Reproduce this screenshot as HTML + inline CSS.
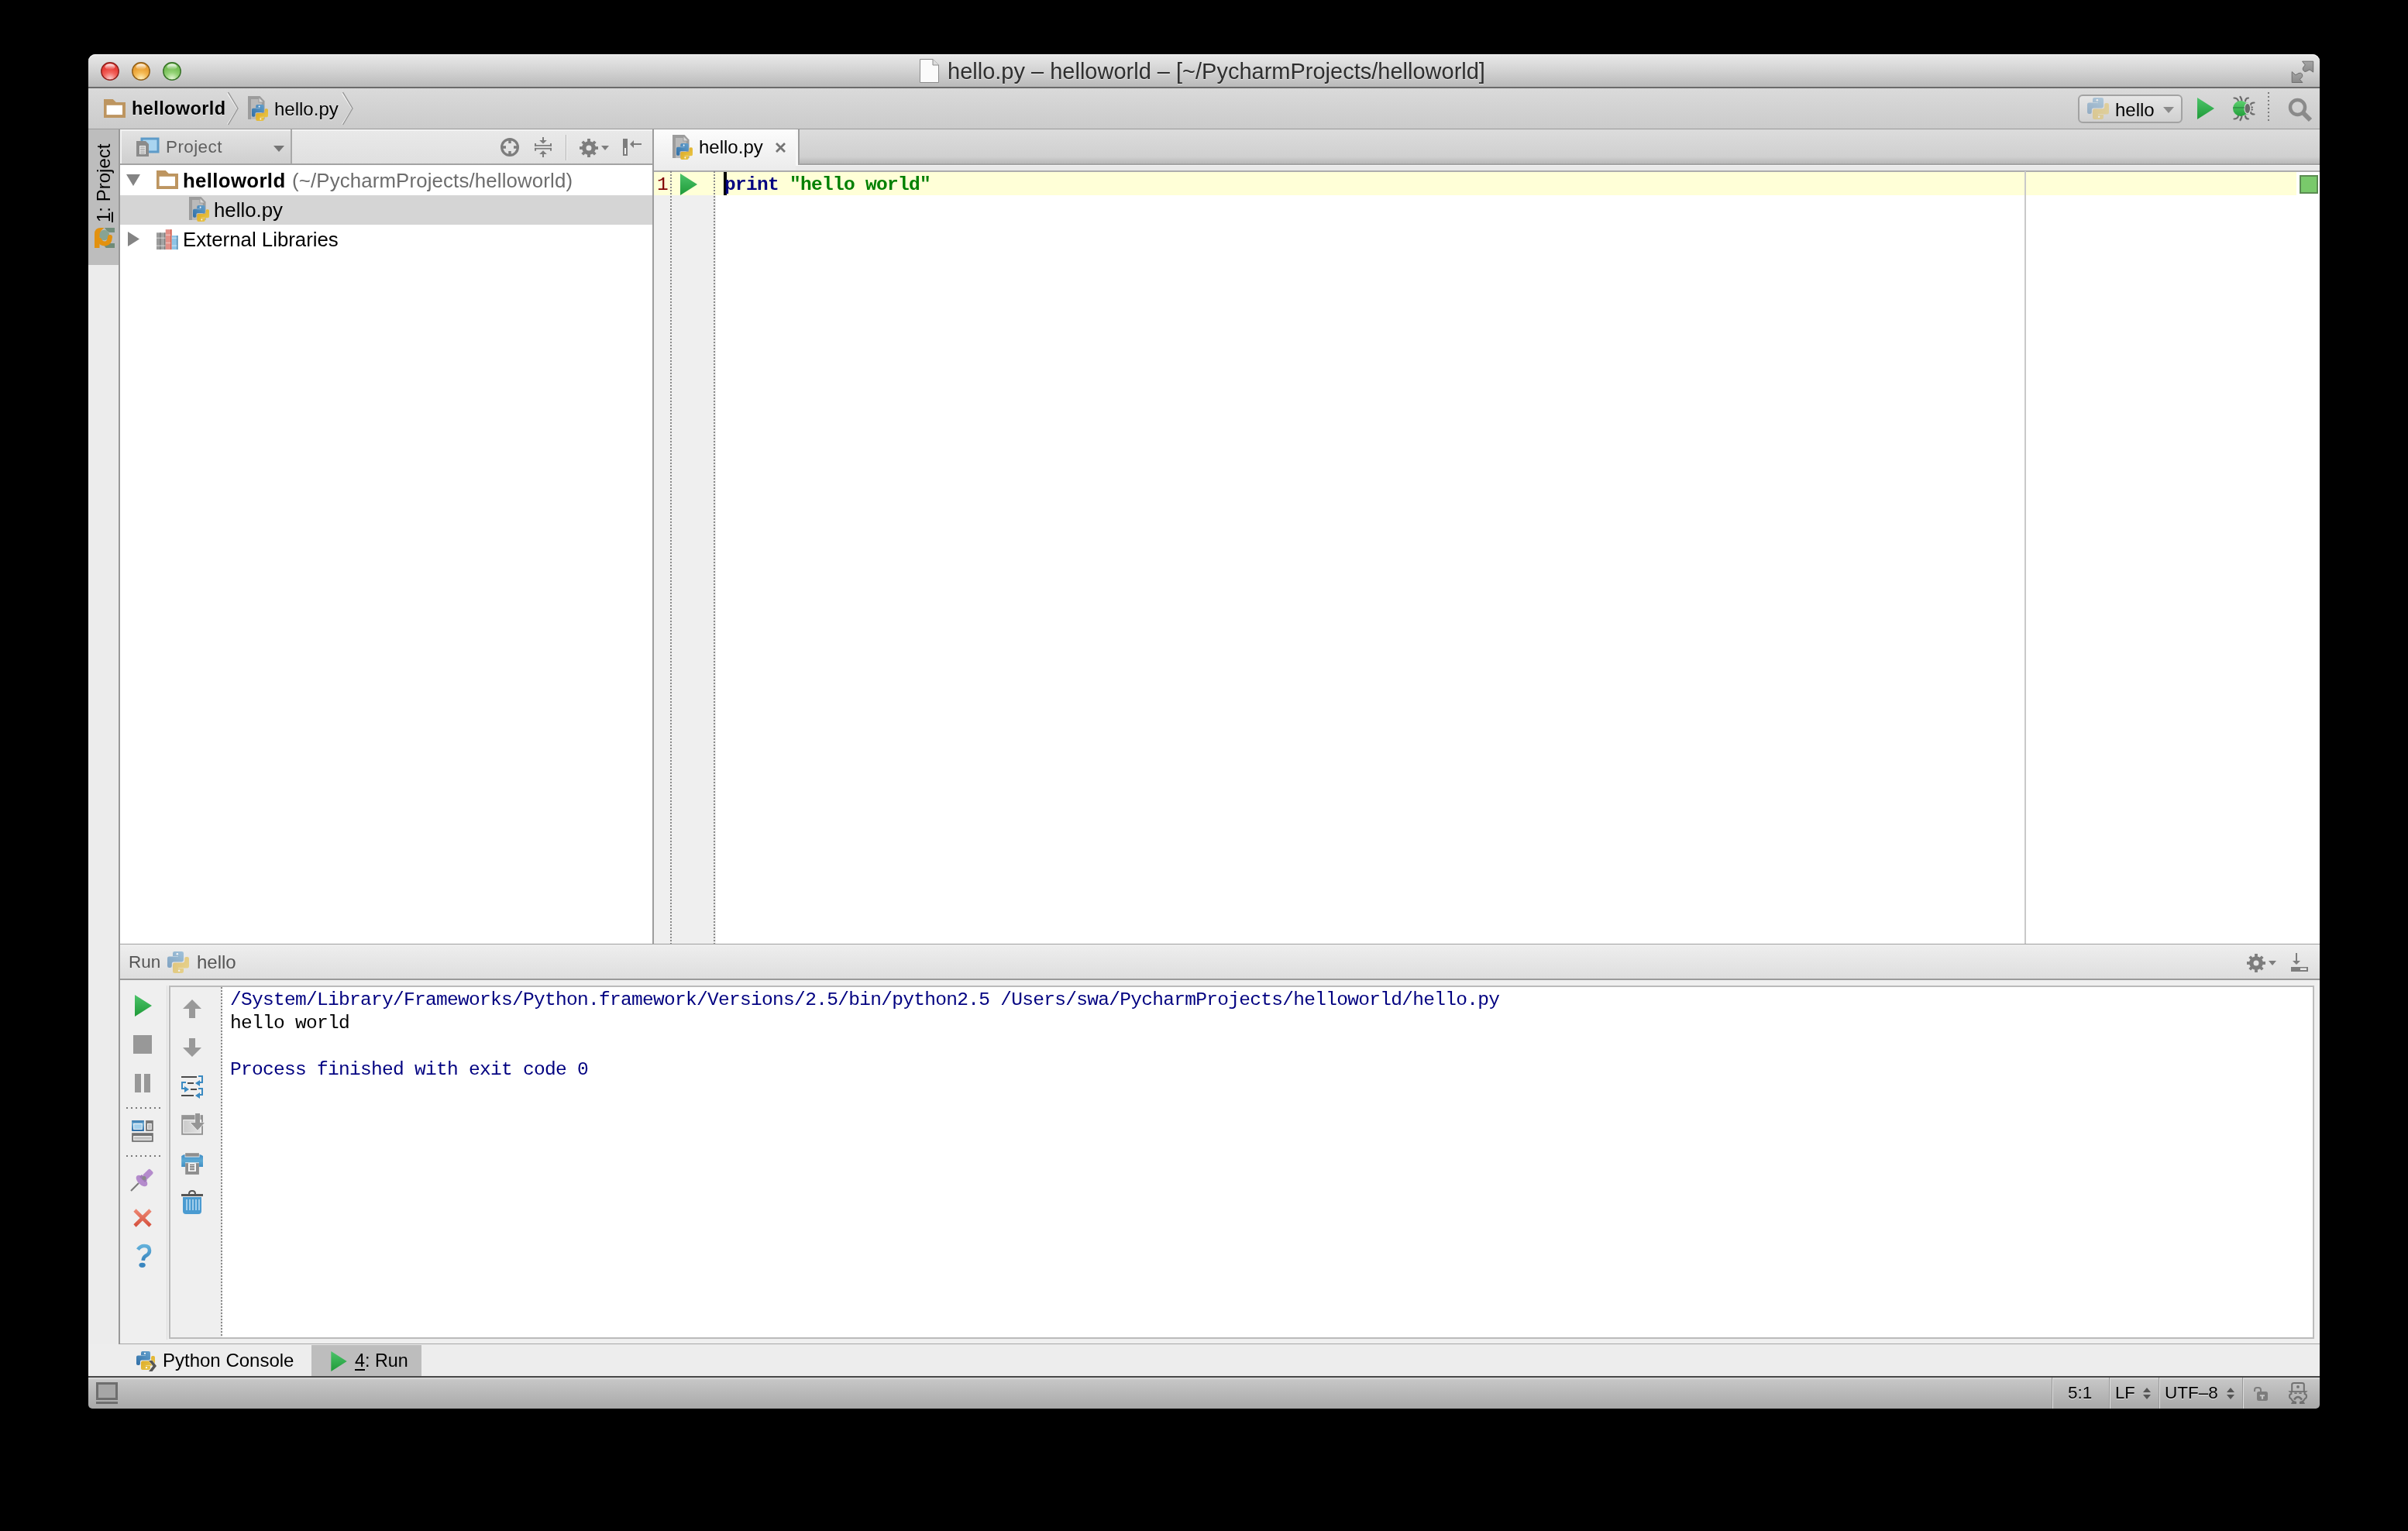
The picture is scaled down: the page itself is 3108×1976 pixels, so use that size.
<!DOCTYPE html>
<html><head><meta charset="utf-8"><title>PyCharm</title>
<style>
*{margin:0;padding:0;box-sizing:border-box}
html,body{width:3108px;height:1976px;background:#000;overflow:hidden;font-family:"Liberation Sans",sans-serif}
.a{position:absolute}
.t{position:absolute;white-space:pre;line-height:1;font-family:"Liberation Sans",sans-serif;will-change:transform}
.mono{font-family:"Liberation Mono",monospace;letter-spacing:-0.7px}
svg.a{overflow:visible}
</style></head>
<body>

<svg width="0" height="0" style="position:absolute">
<defs>
<linearGradient id="gRun" x1="0" y1="0" x2="0" y2="1"><stop offset="0" stop-color="#4cc46a"/><stop offset="1" stop-color="#1f9a38"/></linearGradient>
<linearGradient id="gBug" x1="0" y1="0" x2="0" y2="1"><stop offset="0" stop-color="#5ccf6e"/><stop offset="1" stop-color="#23a03c"/></linearGradient>
<radialGradient id="gRed" cx="0.5" cy="0.95" r="0.65"><stop offset="0" stop-color="#fbd0d0"/><stop offset="0.6" stop-color="#f2635c"/><stop offset="1" stop-color="#e8403a"/></radialGradient>
<radialGradient id="gYel" cx="0.5" cy="0.95" r="0.65"><stop offset="0" stop-color="#fff2c0"/><stop offset="0.6" stop-color="#f4b851"/><stop offset="1" stop-color="#e9a035"/></radialGradient>
<radialGradient id="gGrn" cx="0.5" cy="0.95" r="0.65"><stop offset="0" stop-color="#e6f7d6"/><stop offset="0.6" stop-color="#92d274"/><stop offset="1" stop-color="#78bf58"/></radialGradient>
<linearGradient id="gHi" x1="0" y1="0" x2="0" y2="1"><stop offset="0" stop-color="#fff" stop-opacity=".95"/><stop offset="1" stop-color="#fff" stop-opacity="0"/></linearGradient>
<linearGradient id="gPyB" x1="1" y1="0" x2="0" y2="1"><stop offset="0" stop-color="#64a0cc"/><stop offset="1" stop-color="#2f6ea6"/></linearGradient>
<linearGradient id="gPyY" x1="0" y1="0" x2="1" y2="1"><stop offset="0" stop-color="#ecca4c"/><stop offset="1" stop-color="#d9a521"/></linearGradient>
<symbol id="py" viewBox="0 0 24 24">
 <path fill="url(#gPyB)" d="M6 2Q6 0 8 0H16Q18 0 18 2V9.5Q18 11.5 16 11.5H7Q5 11.5 5 13.5V16Q5 18 3 18H2Q0 18 0 16V7.5Q0 5.5 2 5.5H6Z"/>
 <rect x="6" y="5.1" width="6" height="0.8" fill="#fff" opacity=".45"/>
 <circle cx="11" cy="2.8" r="1.1" fill="#fff"/>
 <path fill="url(#gPyY)" transform="rotate(180 12 12)" d="M6 2Q6 0 8 0H16Q18 0 18 2V9.5Q18 11.5 16 11.5H7Q5 11.5 5 13.5V16Q5 18 3 18H2Q0 18 0 16V7.5Q0 5.5 2 5.5H6Z"/>
 <rect x="12" y="18.1" width="6" height="0.8" fill="#fff" opacity=".45"/>
 <circle cx="13" cy="21.2" r="1.1" fill="#fff"/>
</symbol>
<symbol id="pyfile" viewBox="0 0 27 32">
 <path d="M1 0H16.5L22.5 6.5V30H1Z" fill="#9c9c9c"/>
 <path d="M5 4H14.5V8.5H18.8V30H5Z" fill="#fff" opacity=".3"/>
 <path d="M15.5 2.5L20.5 7.5H15.5Z" fill="#f2f2f2" opacity=".7"/>
 <use href="#py" x="6" y="11" width="21" height="21"/>
</symbol>
<symbol id="folder" viewBox="0 0 28 24">
 <path fill="#bd9560" d="M0 0H11.7L15.8 4H28V24H0Z"/>
 <rect x="3.6" y="7.8" width="20.4" height="12.3" fill="#fff"/>
</symbol>
<symbol id="runtri" viewBox="0 0 22 28">
 <path d="M0 0L22 14L0 28Z" fill="url(#gRun)"/>
</symbol>
</defs></svg>
<div class="a" style="left:114px;top:70px;width:2880px;height:42px;background:linear-gradient(#e9e9e9,#d3d3d3 50%,#bababa);border-radius:9px 9px 0 0;box-shadow:inset 0 1px 0 #f8f8f8"></div>
<div class="a" style="left:114px;top:112px;width:2880px;height:2px;background:#6b6b6b"></div>
<div class="a" style="left:114px;top:114px;width:2880px;height:52px;background:linear-gradient(#dadada,#cbcbcb)"></div>
<div class="a" style="left:114px;top:166px;width:2880px;height:1px;background:#9a9a9a"></div>
<div class="a" style="left:114px;top:167px;width:39px;height:1609px;background:#ececec"></div>
<div class="a" style="left:114px;top:167px;width:39px;height:175px;background:#bdbdbd"></div>
<div class="a" style="left:153px;top:167px;width:2px;height:1568px;background:#999"></div>
<div class="a" style="left:155px;top:167px;width:687px;height:44px;background:linear-gradient(#e9e9e9,#e0e0e0);box-shadow:inset 0 2px 0 #f3f3f3"></div>
<div class="a" style="left:155px;top:167px;width:220px;height:44px;background:linear-gradient(#e3e3e3,#cfcfcf);box-shadow:inset 2px 2px 0 #f2f2f2"></div>
<div class="a" style="left:375px;top:167px;width:2px;height:44px;background:#a9a9a9"></div>
<div class="a" style="left:155px;top:211px;width:687px;height:2px;background:#a3a3a3"></div>
<div class="a" style="left:155px;top:213px;width:687px;height:1005px;background:#fff"></div>
<div class="a" style="left:155px;top:252px;width:687px;height:38px;background:#d5d5d5"></div>
<div class="a" style="left:842px;top:167px;width:2px;height:1051px;background:#9d9d9d"></div>
<div class="a" style="left:844px;top:167px;width:2150px;height:53px;background:#e9e9e9"></div>
<div class="a" style="left:1030px;top:167px;width:1964px;height:46px;background:linear-gradient(#dcdcdc,#d0d0d0 80%,#b9b9b9);border-left:2px solid #9d9d9d;border-bottom:2px solid #a4a4a4"></div>
<div class="a" style="left:1030px;top:213px;width:1964px;height:1px;background:#f6f6f6"></div>
<div class="a" style="left:844px;top:167px;width:183px;height:53px;background:linear-gradient(#fcfcfc,#ebebeb)"></div>
<div class="a" style="left:1027px;top:167px;width:3px;height:47px;background:#f8f8f8"></div>
<div class="a" style="left:844px;top:220px;width:2150px;height:2px;background:#adadad"></div>
<div class="a" style="left:844px;top:222px;width:2150px;height:996px;background:#fff"></div>
<div class="a" style="left:844px;top:222px;width:80px;height:996px;background:#efefef"></div>
<div class="a" style="left:844px;top:222px;width:2120px;height:30px;background:#ffffd7"></div>
<div class="a" style="left:865px;top:221px;width:2px;height:997px;background:repeating-linear-gradient(#8a8a8a 0 2px,transparent 2px 4px)"></div>
<div class="a" style="left:921px;top:221px;width:2px;height:997px;background:repeating-linear-gradient(#8a8a8a 0 2px,transparent 2px 4px)"></div>
<div class="a" style="left:2613px;top:221px;width:2px;height:997px;background:#c9c9c9"></div>
<div class="a" style="left:155px;top:1218px;width:2839px;height:1px;background:#a0a0a0"></div>
<div class="a" style="left:155px;top:1219px;width:2839px;height:44px;background:linear-gradient(#eeeeee,#dedede)"></div>
<div class="a" style="left:155px;top:1263px;width:2839px;height:2px;background:#999"></div>
<div class="a" style="left:155px;top:1265px;width:2839px;height:469px;background:#efefef"></div>
<div class="a" style="left:215px;top:1272px;width:1px;height:457px;background:#dcdcdc"></div>
<div class="a" style="left:218px;top:1272px;width:2769px;height:456px;border:2px solid #bbbbbb;background:#efefef"></div>
<div class="a" style="left:285px;top:1274px;width:2px;height:452px;background:repeating-linear-gradient(#8a8a8a 0 2px,transparent 2px 4px)"></div>
<div class="a" style="left:287px;top:1274px;width:2698px;height:452px;background:#fff"></div>
<div class="a" style="left:155px;top:1734px;width:2839px;height:1px;background:#a8a8a8"></div>
<div class="a" style="left:114px;top:1735px;width:2880px;height:41px;background:#ededed"></div>
<div class="a" style="left:402px;top:1736px;width:142px;height:40px;background:#bdbdbd"></div>
<div class="a" style="left:114px;top:1776px;width:2880px;height:2px;background:#474747"></div>
<div class="a" style="left:114px;top:1778px;width:2880px;height:40px;background:linear-gradient(#e2e2e2,#c6c6c6 7%,#a9a9a9);border-radius:0 0 5px 5px"></div>
<svg class="a" style="left:130px;top:80px;" width="24" height="24" viewBox="0 0 24 24"><circle cx="12" cy="12" r="11.2" fill="url(#gRed)" stroke="#8e1f1b" stroke-width="1.4"/><ellipse cx="12" cy="6.2" rx="6.5" ry="3.8" fill="url(#gHi)"/></svg>
<svg class="a" style="left:170px;top:80px;" width="24" height="24" viewBox="0 0 24 24"><circle cx="12" cy="12" r="11.2" fill="url(#gYel)" stroke="#8d5c17" stroke-width="1.4"/><ellipse cx="12" cy="6.2" rx="6.5" ry="3.8" fill="url(#gHi)"/></svg>
<svg class="a" style="left:210px;top:80px;" width="24" height="24" viewBox="0 0 24 24"><circle cx="12" cy="12" r="11.2" fill="url(#gGrn)" stroke="#346f25" stroke-width="1.4"/><ellipse cx="12" cy="6.2" rx="6.5" ry="3.8" fill="url(#gHi)"/></svg>
<svg class="a" style="left:1187px;top:76px;" width="25" height="31" viewBox="0 0 25 31"><path d="M0.5 0.5H17L24.5 8V30.5H0.5Z" fill="#fbfbfb" stroke="#8c8c8c"/><path d="M17 0.5V8H24.5" fill="#ddd" stroke="#8c8c8c"/></svg>
<div class="t" style="left:1223px;top:78px;font-size:29px;color:#2e2e2e;text-shadow:0 1px 0 rgba(255,255,255,.5)">hello.py – helloworld – [~/PycharmProjects/helloworld]</div>
<svg class="a" style="left:2952px;top:74px;" width="40" height="38" viewBox="0 0 40 38"><defs><linearGradient id="gEx" x1="0" y1="0" x2="0" y2="1"><stop offset="0" stop-color="#a6a6a6"/><stop offset="1" stop-color="#8a8a8a"/></linearGradient></defs><g fill="url(#gEx)" stroke="#6e6e6e" stroke-width="1"><path d="M19.6 5.2H33.7V19.1L29 15.9L25 18Q22 19.5 20.5 16.5Q19.5 14 21.5 12L23.3 9.9Z"/><path d="M6.2 32.5V18.6L10.9 22.8L15 20.5Q18 19 19.5 22Q20.5 24.5 18.5 26.5L16.1 28.3L19.9 32.5Z"/></g></svg>
<svg class="a" style="left:134px;top:128px;" width="28" height="24"><use href="#folder"/></svg>
<div class="t" style="left:170px;top:128.6px;font-size:23.5px;font-weight:bold;color:#000;letter-spacing:.4px;text-shadow:0 1px 0 rgba(255,255,255,.6)">helloworld</div>
<svg class="a" style="left:293px;top:119px;" width="15" height="42" viewBox="0 0 15 42"><path d="M0.5 1.5L13.5 21.5L0.5 41.5" fill="none" stroke="#f6f6f6" stroke-width="1.2"/><path d="M1.5 0L14 21L1.5 42" fill="none" stroke="#959595" stroke-width="1.4"/></svg>
<svg class="a" style="left:319px;top:124px;" width="27" height="32"><use href="#pyfile"/></svg>
<div class="t" style="left:354px;top:128.5px;font-size:24px;color:#000;text-shadow:0 1px 0 rgba(255,255,255,.6)">hello.py</div>
<svg class="a" style="left:441px;top:119px;" width="15" height="42" viewBox="0 0 15 42"><path d="M0.5 1.5L13.5 21.5L0.5 41.5" fill="none" stroke="#f6f6f6" stroke-width="1.2"/><path d="M1.5 0L14 21L1.5 42" fill="none" stroke="#959595" stroke-width="1.4"/></svg>
<div class="a" style="left:2682px;top:122px;width:135px;height:37px;border:2px solid #a2a2a2;border-radius:6px;background:linear-gradient(#e6e6e6,#d0d0d0)"></div>
<svg class="a" style="left:2694px;top:126px;opacity:.4" width="28" height="28"><use href="#py"/></svg>
<div class="t" style="left:2729.5px;top:130px;font-size:24px;color:#000">hello</div>
<svg class="a" style="left:2792px;top:138px;" width="14" height="8" viewBox="0 0 14 8"><path d="M0 0H14L7 8Z" fill="#8a8a8a"/></svg>
<svg class="a" style="left:2836px;top:126px;" width="22" height="28"><use href="#runtri"/></svg>
<svg class="a" style="left:2876px;top:120px;" width="40" height="40" viewBox="0 0 40 40"><g stroke="#6a6a6a" stroke-width="2.2" fill="none" stroke-linecap="round"><path d="M7.5 6.5Q12 6.5 13 10.5"/><path d="M15.5 5Q17 7 17.5 10"/><path d="M26 6.5Q22.5 6.5 22 10.5"/><path d="M7.5 33.5Q12 33.5 13 29.5"/><path d="M15.5 35Q17 33 17.5 30"/><path d="M26 33.5Q22.5 33.5 22 29.5"/><path d="M33.5 12.5Q29 12.5 28.5 16"/><path d="M33.5 27.5Q29 27.5 28.5 24"/><path d="M29 18.5H31M29 21.5H31"/></g><circle cx="16" cy="20" r="10" fill="url(#gBug)"/><path d="M22 12.5L26 12.5L26 27.5L22 27.5Z" fill="url(#gBug)"/><ellipse cx="25" cy="20" rx="4.6" ry="7.6" fill="#d5d5d5"/><ellipse cx="24.8" cy="20" rx="3.3" ry="6" fill="#6a6a6a"/><rect x="6.2" y="18.2" width="14.5" height="1.5" fill="#2f8f45"/></svg>
<div class="a" style="left:2927px;top:119px;width:2px;height:38px;background:repeating-linear-gradient(#7c7c7c 0 2px,transparent 2px 5px)"></div>
<svg class="a" style="left:2953px;top:126px;" width="32" height="31" viewBox="0 0 32 31"><circle cx="12.5" cy="12.5" r="9.5" fill="none" stroke="#8a8a8a" stroke-width="4.5"/><path d="M19 19L29 29" stroke="#8a8a8a" stroke-width="6" stroke-linecap="butt"/></svg>
<div class="t" style="left:122px;top:287px;font-size:24px;color:#000;transform-origin:0 0;transform:rotate(-90deg)"><u style="text-decoration-thickness:2px;text-underline-offset:2px">1</u>: Project</div>
<svg class="a" style="left:122px;top:294px;" width="26" height="26" viewBox="0 0 26 26"><path d="M13 0H26V6H19Q15 4 13 0Z" fill="#728f7c"/><circle cx="12.5" cy="9.5" r="6.8" fill="#87a392"/><path d="M13 20H26V26H15Q12 24 13 20Z" fill="#6f8b78"/><path d="M0 26V8Q0 0 8 0H12.5Q8 3 6.5 8V26Z" fill="#e2910f"/><path d="M6.5 16Q9 21 14 20.5Q19.5 19.5 20 12" fill="none" stroke="#e2910f" stroke-width="6" stroke-linecap="round"/></svg>
<svg class="a" style="left:176px;top:178px;" width="29" height="25" viewBox="0 0 29 25"><rect x="7" y="1" width="21" height="17" fill="#a9d4f0" stroke="#5e9bc8" stroke-width="3"/><path d="M0 4H12L16 8V24H0Z" fill="#8b8b8b"/><rect x="4" y="10" width="8" height="11" fill="#eee"/><path d="M5 12H11M5 14.5H11M5 17H11M5 19.5H11" stroke="#888" stroke-width="1"/></svg>
<div class="t" style="left:214px;top:178.6px;font-size:22.5px;color:#606060;letter-spacing:.4px">Project</div>
<svg class="a" style="left:353px;top:188px;" width="14" height="8" viewBox="0 0 14 8"><path d="M0 0H14L7 8Z" fill="#747474"/></svg>
<svg class="a" style="left:646px;top:178px;" width="24" height="24" viewBox="0 0 24 24"><circle cx="12" cy="12" r="10.4" fill="none" stroke="#7d7d7d" stroke-width="3.2"/><path d="M12 1V7M12 17V23M1 12H7M17 12H23" stroke="#7d7d7d" stroke-width="3.4"/></svg>
<svg class="a" style="left:689px;top:177px;" width="24" height="26" viewBox="0 0 24 26"><g fill="#7d7d7d"><rect x="1" y="10" width="22" height="1.7"/><rect x="1" y="13.9" width="22" height="1.7"/><rect x="1" y="8" width="2" height="3.7"/><rect x="21" y="8" width="2" height="3.7"/><rect x="1" y="13.9" width="2" height="3.8"/><rect x="21" y="13.9" width="2" height="3.8"/><rect x="11" y="0" width="2" height="4.5"/><path d="M7.2 4H16.8L12 8.6Z"/><rect x="11" y="21.5" width="2" height="4.5"/><path d="M7.2 22H16.8L12 17.2Z"/></g></svg>
<div class="a" style="left:730px;top:174px;width:1px;height:33px;background:#b5b5b5;box-shadow:1px 0 0 #f5f5f5"></div>
<svg class="a" style="left:747px;top:178px;" width="26" height="26" viewBox="0 0 26 26"><g fill="#7d7d7d"><circle cx="13" cy="13" r="8.8"/><rect x="11.1" y="1" width="3.8" height="24"/><rect x="1" y="11.1" width="24" height="3.8"/><rect x="11.1" y="1.3" width="3.8" height="23.4" transform="rotate(45 13 13)"/><rect x="11.1" y="1.3" width="3.8" height="23.4" transform="rotate(-45 13 13)"/></g><circle cx="13" cy="13" r="3.5" fill="#e4e4e4"/></svg>
<svg class="a" style="left:776px;top:188px;" width="10" height="6" viewBox="0 0 10 6"><path d="M0 0H10L5 6Z" fill="#7d7d7d"/></svg>
<svg class="a" style="left:804px;top:179px;" width="24" height="22" viewBox="0 0 24 22"><rect x="0" y="0" width="6" height="22" fill="#7d7d7d"/><rect x="2" y="12" width="2" height="8" fill="#f4f4f4"/><path d="M9 7L14 2V6H24V8H14V12Z" fill="#7d7d7d"/></svg>
<svg class="a" style="left:163px;top:225px;" width="18" height="15" viewBox="0 0 18 15"><path d="M0 0H18L9 15Z" fill="#848484"/></svg>
<svg class="a" style="left:202px;top:220px;" width="28" height="24"><use href="#folder"/></svg>
<div class="t" style="left:236px;top:221.2px;font-size:25.8px;font-weight:bold;color:#000;letter-spacing:.35px">helloworld</div>
<div class="t" style="left:376.5px;top:221.2px;font-size:25.8px;color:#6d6d6d;letter-spacing:.15px">(~/PycharmProjects/helloworld)</div>
<svg class="a" style="left:243px;top:254px;" width="27" height="32"><use href="#pyfile"/></svg>
<div class="t" style="left:276px;top:259.2px;font-size:25.8px;color:#000">hello.py</div>
<svg class="a" style="left:165px;top:299px;" width="15" height="19" viewBox="0 0 15 19"><path d="M0 0V19L15 9.5Z" fill="#848484"/></svg>
<svg class="a" style="left:202px;top:296px;" width="28" height="26.2" viewBox="0 0 27 25"><rect x="0" y="4" width="5.5" height="21" fill="#9b9b9b"/><rect x="4.3" y="4" width="1.2" height="21" fill="#6e6e6e"/><rect x="5.6" y="4" width="5.5" height="21" fill="#a3a3a3"/><rect x="9.9" y="4" width="1.2" height="21" fill="#707070"/><rect x="11.3" y="0" width="7.5" height="25" fill="#e38f87"/><rect x="17.6" y="0" width="1.2" height="25" fill="#d0533f"/><rect x="19" y="7.6" width="7.5" height="17.4" fill="#8ec4e6"/><rect x="25.3" y="7.6" width="1.2" height="17.4" fill="#4a82a8"/><g fill="#fff" opacity=".4"><rect x="0" y="10" width="11" height="1.5"/><rect x="0" y="19.6" width="11" height="1.5"/><rect x="11.3" y="6.2" width="6.3" height="1.5"/><rect x="11.3" y="16" width="6.3" height="1.5"/><rect x="19" y="10" width="6.3" height="1.5"/><rect x="19" y="19.6" width="6.3" height="1.5"/></g></svg>
<div class="t" style="left:236px;top:297.2px;font-size:25.8px;color:#000">External Libraries</div>
<svg class="a" style="left:867px;top:174px;" width="27" height="32"><use href="#pyfile"/></svg>
<div class="t" style="left:902px;top:178.4px;font-size:24px;color:#000">hello.py</div>
<svg class="a" style="left:1001px;top:184px;" width="13" height="13" viewBox="0 0 13 13"><path d="M1 1L12 12M12 1L1 12" stroke="#747474" stroke-width="2.8"/></svg>
<div class="t mono" style="left:848px;top:227.4px;font-size:24.5px;color:#800000">1</div>
<svg class="a" style="left:878px;top:224px;" width="22" height="28"><use href="#runtri"/></svg>
<div class="a" style="left:934px;top:222px;width:4px;height:30px;background:#000"></div>
<div class="t mono" style="left:935px;top:227.4px;font-size:24.5px;"><b style="color:#000080">print</b> <b style="color:#008000">"hello world"</b></div>
<div class="a" style="left:2968px;top:226px;width:24px;height:24px;background:#79c96b;border:2px solid #5b8c52"></div>
<div class="t" style="left:166px;top:1231px;font-size:22.5px;color:#555">Run</div>
<svg class="a" style="left:216px;top:1228px;opacity:.55" width="28" height="28"><use href="#py"/></svg>
<div class="t" style="left:254px;top:1229.6px;font-size:24px;color:#555">hello</div>
<svg class="a" style="left:2899px;top:1230px;" width="26" height="26" viewBox="0 0 26 26"><g fill="#7d7d7d"><circle cx="13" cy="13" r="8.8"/><rect x="11.1" y="1" width="3.8" height="24"/><rect x="1" y="11.1" width="24" height="3.8"/><rect x="11.1" y="1.3" width="3.8" height="23.4" transform="rotate(45 13 13)"/><rect x="11.1" y="1.3" width="3.8" height="23.4" transform="rotate(-45 13 13)"/></g><circle cx="13" cy="13" r="3.5" fill="#e6e6e6"/></svg>
<svg class="a" style="left:2928px;top:1240px;" width="10" height="6" viewBox="0 0 10 6"><path d="M0 0H10L5 6Z" fill="#7d7d7d"/></svg>
<svg class="a" style="left:2957px;top:1230px;" width="22" height="24" viewBox="0 0 22 24"><rect x="6" y="0" width="2" height="11" fill="#7d7d7d"/><path d="M2 10H12L7 15Z" fill="#7d7d7d"/><rect x="0" y="18" width="22" height="6" fill="#7d7d7d"/><rect x="12" y="19.5" width="8" height="2.5" fill="#ececec"/></svg>
<svg class="a" style="left:174px;top:1284px;" width="22" height="28"><use href="#runtri"/></svg>
<div class="a" style="left:172px;top:1336px;width:24px;height:24px;background:#989898"></div>
<div class="a" style="left:174px;top:1386px;width:8px;height:24px;background:#989898"></div>
<div class="a" style="left:186px;top:1386px;width:8px;height:24px;background:#989898"></div>
<div class="a" style="left:163px;top:1429px;width:45px;height:2px;background:repeating-linear-gradient(90deg,#7a7a7a 0 2px,transparent 2px 6px)"></div>
<svg class="a" style="left:170px;top:1446px;" width="28" height="28" viewBox="0 0 28 28"><defs><linearGradient id="gLy" x1="0" y1="0" x2="0" y2="1"><stop offset="0" stop-color="#2f72a8"/><stop offset=".3" stop-color="#6aaad4"/><stop offset="1" stop-color="#1d62a0"/></linearGradient></defs><rect x="0.1" y="0.1" width="15.8" height="13.8" fill="url(#gLy)"/><rect x="2.1" y="3.9" width="11.7" height="8" fill="#f8f8f8"/><rect x="3.1" y="5" width="9.8" height="6" fill="#a3d0ec"/><rect x="18.1" y="0.1" width="9.7" height="13.8" fill="#767676"/><rect x="20" y="3.9" width="5.8" height="8" fill="#f4f4f4"/><rect x="21.1" y="5" width="3.7" height="6" fill="#c4c4c4"/><rect x="0.1" y="16.2" width="27.7" height="11.6" fill="#727272"/><rect x="2.1" y="20" width="23.7" height="5.9" fill="#f4f4f4"/><rect x="3.1" y="21.2" width="21.7" height="3.6" fill="#c4c4c4"/></svg>
<div class="a" style="left:163px;top:1491px;width:45px;height:2px;background:repeating-linear-gradient(90deg,#7a7a7a 0 2px,transparent 2px 6px)"></div>
<svg class="a" style="left:168px;top:1508px;" width="30" height="30" viewBox="0 0 30 30"><path d="M1 29L11 19" stroke="#7a7a7a" stroke-width="2.2"/><rect x="19" y="1" width="8" height="13" rx="2" transform="rotate(45 23 7.5)" fill="#b48bcc"/><ellipse cx="15" cy="16" rx="9" ry="5" transform="rotate(45 15 16)" fill="#b48bcc"/><rect x="12" y="11" width="10" height="4" transform="rotate(45 17 13)" fill="#a07ab8"/><circle cx="18" cy="12.5" r="2.6" fill="#8a8a8a"/></svg>
<svg class="a" style="left:172px;top:1560px;" width="24" height="24" viewBox="0 0 24 24"><defs><linearGradient id="gX" x1="0" y1="0" x2="0" y2="1"><stop offset="0" stop-color="#ec8571"/><stop offset="1" stop-color="#d6523f"/></linearGradient></defs><path d="M2 2L22 22M22 2L2 22" stroke="url(#gX)" stroke-width="4.6"/></svg>
<svg class="a" style="left:174px;top:1606px;" width="22" height="32" viewBox="0 0 22 32"><defs><linearGradient id="gQ" x1="0" y1="0" x2="0" y2="1"><stop offset="0" stop-color="#62b0da"/><stop offset="1" stop-color="#3a86bf"/></linearGradient></defs><path d="M4 6.8Q7 2 12.2 2Q19 2 19 8Q19 12.2 14.5 14.6Q11 16.6 10.7 20.8" fill="none" stroke="url(#gQ)" stroke-width="4.6"/><ellipse cx="9.6" cy="26.8" rx="4.2" ry="3.1" fill="#3a86bf"/></svg>
<svg class="a" style="left:236px;top:1290px;" width="24" height="24" viewBox="0 0 24 24"><path d="M12 0L24 12H16V24H8V12H0Z" fill="#999"/></svg>
<svg class="a" style="left:236px;top:1340px;" width="24" height="24" viewBox="0 0 24 24"><path d="M12 24L24 12H16V0H8V12H0Z" fill="#999"/></svg>
<svg class="a" style="left:234px;top:1388px;" width="28" height="30" viewBox="0 0 28 30"><g fill="#4b4b4b"><rect x="0" y="1" width="20" height="2"/><rect x="8" y="9" width="8" height="2"/><rect x="12" y="17" width="8" height="2"/><rect x="0" y="25" width="16" height="2"/></g><g fill="none" stroke="#3a8ac2" stroke-width="2"><path d="M22 1H27V9H23"/><path d="M6 9H1V17H5"/><path d="M22 17H27V25H23"/></g><g fill="#3a8ac2"><path d="M18 10L24 6V14Z"/><path d="M10 18L4 14V22Z"/><path d="M18 26L24 22V30Z"/></g></svg>
<svg class="a" style="left:234px;top:1437px;" width="32" height="28" viewBox="0 0 32 28"><defs><linearGradient id="gEp" x1="0" y1="0" x2="1" y2="0"><stop offset="0" stop-color="#cbcbcb"/><stop offset="1" stop-color="#e2e2e2"/></linearGradient></defs><rect x="0.2" y="2.1" width="27.8" height="25.7" fill="#959595"/><rect x="2.2" y="8" width="23.8" height="17.8" fill="#f6f6f6"/><rect x="3.2" y="9" width="21.8" height="15.8" fill="url(#gEp)"/><path d="M18.1 0H24V12.1H29.9L21 21.8L11.9 12.1H18.1Z" fill="#959595" stroke="#f0f0f0" stroke-width="1.2" paint-order="stroke"/></svg>
<svg class="a" style="left:234px;top:1488px;" width="28" height="28" viewBox="0 0 28 28"><defs><linearGradient id="gPr" x1="0" y1="0" x2="0" y2="1"><stop offset="0" stop-color="#3e8cc6"/><stop offset=".5" stop-color="#5eaad4"/><stop offset="1" stop-color="#3f8fc4"/></linearGradient></defs><rect x="4.4" y="-0.4" width="19.3" height="5.8" fill="#f4f4f4"/><rect x="5.2" y="0.2" width="17.7" height="4.4" fill="#8e8e8e"/><path d="M0.2 4Q2 2.4 4.6 2V5.6H23.5V2Q26 2.4 28 4V17.9H22.9V12.2H5.2V17.9H0.2Z" fill="url(#gPr)"/><rect x="5.2" y="13.2" width="17.7" height="14.7" fill="#8e8e8e"/><rect x="9" y="13.2" width="10" height="10.8" fill="#f6f6f6"/><path d="M11 15.5H17M11 17.6H17M11 19.6H17M11 21.7H17" stroke="#555" stroke-width="1"/></svg>
<svg class="a" style="left:234px;top:1537px;" width="28" height="30" viewBox="0 0 28 30"><path d="M10 4Q10 0 14 0Q18 0 18 4" fill="none" stroke="#555" stroke-width="2"/><rect x="0" y="4" width="28" height="3" fill="#555"/><path d="M2 8H26V26Q26 30 22 30H6Q2 30 2 26Z" fill="#4a9bd1"/><path d="M7 11V25M11 11V25M15 11V25M19 11V25M23 11V25" stroke="#bfe0f4" stroke-width="1.5"/></svg>
<div class="t mono" style="left:297px;top:1279.4px;font-size:24.5px;color:#000080">/System/Library/Frameworks/Python.framework/Versions/2.5/bin/python2.5 /Users/swa/PycharmProjects/helloworld/hello.py</div>
<div class="t mono" style="left:297px;top:1309.4px;font-size:24.5px;color:#000">hello world</div>
<div class="t mono" style="left:297px;top:1369.4px;font-size:24.5px;color:#000080">Process finished with exit code 0</div>
<svg class="a" style="left:176px;top:1744px;" width="27" height="27" viewBox="0 0 27 27"><use href="#py" x="0" y="0" width="24" height="24"/><path d="M16 12H20.5L26 19L20.5 26H16L21.5 19Z" fill="#555" stroke="#eee" stroke-width=".8" paint-order="stroke"/></svg>
<div class="t" style="left:210px;top:1744.1px;font-size:24px;color:#000">Python Console</div>
<svg class="a" style="left:427px;top:1744px;" width="21" height="26"><use href="#runtri"/></svg>
<div class="t" style="left:458px;top:1744.6px;font-size:23.3px;color:#000"><u style="text-decoration-thickness:2px;text-underline-offset:3px">4</u>: Run</div>
<svg class="a" style="left:124px;top:1784px;" width="28" height="28" viewBox="0 0 28 28"><rect x="1.5" y="1.5" width="25" height="20" fill="#a6a6a6" stroke="#6e6e6e" stroke-width="3"/><rect x="0" y="25" width="28" height="3" fill="#6e6e6e"/></svg>
<div class="a" style="left:2648px;top:1778px;width:1px;height:40px;background:#9a9a9a;box-shadow:1px 0 0 #dcdcdc"></div>
<div class="a" style="left:2722px;top:1778px;width:1px;height:40px;background:#9a9a9a;box-shadow:1px 0 0 #dcdcdc"></div>
<div class="a" style="left:2786px;top:1778px;width:1px;height:40px;background:#9a9a9a;box-shadow:1px 0 0 #dcdcdc"></div>
<div class="a" style="left:2894px;top:1778px;width:1px;height:40px;background:#9a9a9a;box-shadow:1px 0 0 #dcdcdc"></div>
<div class="t" style="left:2669px;top:1786.5px;font-size:22.5px;color:#000;text-shadow:0 1px 0 rgba(255,255,255,.6)">5:1</div>
<div class="t" style="left:2729.5px;top:1786.5px;font-size:22px;color:#000;text-shadow:0 1px 0 rgba(255,255,255,.6)">LF</div>
<svg class="a" style="left:2766px;top:1791px;" width="10" height="15" viewBox="0 0 10 15"><path d="M5 0L10 6H0Z M5 15L10 9H0Z" fill="#555"/></svg>
<div class="t" style="left:2794px;top:1786.5px;font-size:22.5px;color:#000;text-shadow:0 1px 0 rgba(255,255,255,.6)">UTF–8</div>
<svg class="a" style="left:2874px;top:1791px;" width="10" height="15" viewBox="0 0 10 15"><path d="M5 0L10 6H0Z M5 15L10 9H0Z" fill="#555"/></svg>
<svg class="a" style="left:2909px;top:1790px;" width="19" height="19" viewBox="0 0 19 19"><path d="M1 6V4Q1 1 4 1H6Q9 1 9 4V7" fill="none" stroke="#7d7d7d" stroke-width="2"/><rect x="4" y="6" width="14" height="12" rx="2.5" fill="#7d7d7d"/><rect x="7.8" y="10.2" width="6.2" height="2" fill="#c4c4c4"/><rect x="9.9" y="12" width="2.2" height="3.8" fill="#c4c4c4"/></svg>
<svg class="a" style="left:2950px;top:1782px;" width="32" height="32" viewBox="0 0 32 32"><g fill="none" stroke="#707070" stroke-width="2"><path d="M8.2 14.5V5Q8.2 3.1 11 3.1H21Q23.8 3.1 23.8 5V14.5"/><path d="M7.4 15V17Q5 17.5 5 20Q5 22.5 7 23.2Q8 25.5 10.5 27"/><path d="M24.6 15V17Q27 17.5 27 20Q27 22.5 25 23.2Q24 25.5 21.5 27"/><path d="M11 24.5Q16 17.5 21 24.5" stroke-width="2.4"/></g><g fill="#707070"><circle cx="16" cy="7.9" r="1.9"/><path d="M3.3 13.3H28.7L26.7 15.1H5.3Z"/><rect x="11.3" y="15.4" width="3.4" height="1.6"/><rect x="17.3" y="15.4" width="3.4" height="1.6"/><path d="M7 30Q7.5 27.2 10.5 26L14 27V30Z"/><path d="M25 30Q24.5 27.2 21.5 26L18 27V30Z"/></g></svg>
</body></html>
